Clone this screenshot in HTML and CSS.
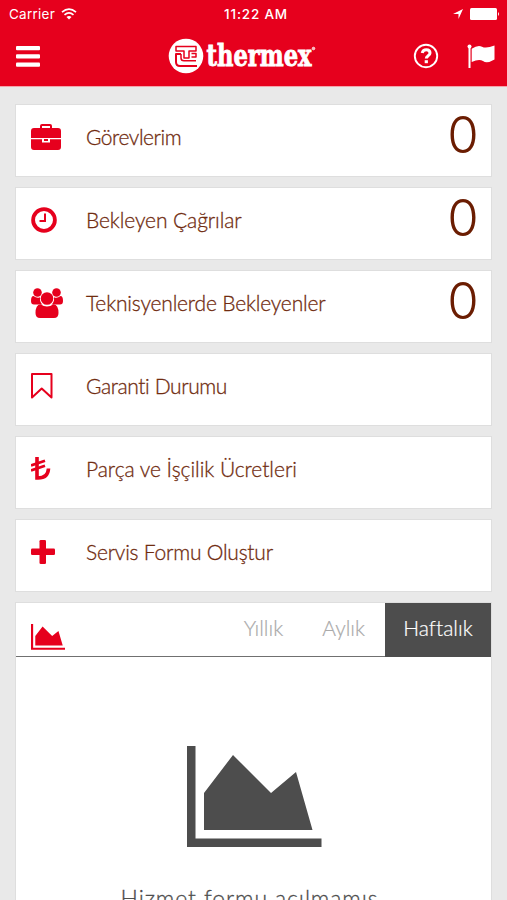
FILE: index.html
```html
<!DOCTYPE html>
<html lang="tr">
<head>
<meta charset="utf-8">
<title>Thermex</title>
<link rel="stylesheet" href="styles.css">
</head>
<body>
<header class="header">
  <div class="status">
    <div class="carrier"><span>Carrier</span>
      <svg width="16" height="12" viewBox="0 0 16 12" fill="none" stroke="#fff" stroke-width="1.7"><path d="M1 4.2Q8-2 15 4.2M3.5 6.9Q8 3 12.500 6.900"/><path d="M8 11.500 5.500 9Q8 7 10.500 9Z" fill="#fff" stroke="none"/></svg>
    </div>
    <span class="time">11:22 AM</span>
    <div class="power">
      <svg width="10" height="10" viewBox="0 0 10 10" fill="#fff"><path d="M10 0 5.500 10V5H0Z"/></svg>
      <svg width="30" height="12" viewBox="0 0 30 12" fill="#fff"><rect width="27" height="12" rx="1.500"/><path d="M28 4q2 2 0 4Z"/></svg>
    </div>
  </div>
  <div class="bar">
    <svg class="menu" width="24" height="21" viewBox="0 0 24 21" fill="#fff"><rect width="24" height="4.300" rx="1"/><rect y="8.300" width="24" height="4.300" rx="1"/><rect y="16.500" width="24" height="4.300" rx="1"/></svg>
    <svg class="logo" width="150" height="36" viewBox="0 0 150 36">
      <circle cx="18" cy="18" r="17.300" fill="#fff"/>
      <g fill="none" stroke="#e6001d" stroke-width="1.500" stroke-linejoin="round"><path d="M8 8.500H28V13H21V20H16V13H8Z"/><path d="M13 16H8V24Q8 28 12 28H29" stroke-width="2"/><path d="M13 16V20Q13 22.800 16 22.800H28M23.500 15.500H28V19H23.500"/></g>
      <text class="brand" x="38.500" y="28.300" textLength="105" lengthAdjust="spacingAndGlyphs">thermex</text>
      <circle cx="145.500" cy="10.500" r="1.300" fill="#f8b8bf" stroke="#fff" stroke-width=".7"/>
    </svg>
    <div class="actions">
      <svg width="26" height="26" viewBox="0 0 26 26" fill="none" stroke="#fff"><circle cx="13" cy="13" r="11.200" stroke-width="1.900"/><path d="M9.200 10Q10 6.800 13.300 6.800Q17 6.800 17 10Q17 11.800 15 12.900Q13.300 14 13.300 15.500" stroke-width="3"/><path d="M13.300 17.200V20.200" stroke-width="3.200"/></svg>
      <svg width="29" height="25" viewBox="0 0 29 25" fill="#fff"><circle cx="2.500" cy="2.500" r="2"/><path d="M1.500 2H3.500V24H1.500ZM4.700 4.700Q11 .5 15 2.700Q19 5 27.500 1.500V15.500Q20 20 16 17Q12 14.500 4.700 18Z"/></svg>
    </div>
  </div>
</header>
<main class="list">
  <a class="card"><span class="icon"><svg width="30" height="26" viewBox="0 0 30 26"><path fill-rule="evenodd" d="M9 4V2Q9 0 11 0H19Q21 0 21 2V4H27Q30 4 30 7V14H0V7Q0 4 3 4ZM11 4H19V2H11ZM0 15.200H11V18.500H19V15.200H30V23Q30 26 27 26H3Q0 26 0 23Z"/><path d="M13 15H17V17H13Z"/></svg></span><span class="label l1">Görevlerim</span><span class="count">0</span></a>
  <a class="card"><span class="icon"><svg width="26" height="26" viewBox="0 0 26 26" fill="none" stroke="#e6001d"><circle cx="13" cy="13" r="10.900" stroke-width="3.800"/><path d="M14 6.500V14H8.500" stroke-width="2"/></svg></span><span class="label l2">Bekleyen Çağrılar</span><span class="count">0</span></a>
  <a class="card"><span class="icon"><svg width="32" height="30" viewBox="0 0 32 30"><circle cx="6.500" cy="4.500" r="4.300"/><circle cx="25.500" cy="4.500" r="4.300"/><path d="M2.500 8Q6 10.800 9 9.200Q8.500 14 11.500 16.500H3Q0 16.500 0 13Q0 8 2.500 8ZM29.500 8Q26 10.800 23 9.200Q23.500 14 20.500 16.500H29Q32 16.500 32 13Q32 8 29.500 8Z"/><circle cx="16" cy="10.500" r="6.300"/><path d="M9.500 16.200Q16 20.800 22.500 16.200Q27.500 17 27.500 25Q27.500 30 23 30H9Q4.500 30 4.500 25Q4.500 17 9.500 16.200Z"/></svg></span><span class="label l3">Teknisyenlerde Bekleyenler</span><span class="count">0</span></a>
  <a class="card"><span class="icon"><svg width="22" height="26" viewBox="0 0 22 26" fill="none" stroke="#e6001d" stroke-width="2" stroke-linejoin="round"><path d="M1 1H20.500V24.500L10.700 15.500 1 24.500Z"/></svg></span><span class="label l4">Garanti Durumu</span></a>
  <a class="card"><span class="icon"><svg width="20" height="24" viewBox="0 0 20 24" fill="none" stroke="#e6001d"><path d="M6 0V21Q17 21.500 17.500 11.500" stroke-width="3.600"/><path d="M0 8.500 14 3.700M0 13.500 14 8.700" stroke-width="2.700"/></svg></span><span class="label l5">Parça ve İşçilik Ücretleri</span></a>
  <a class="card"><span class="icon"><svg width="24" height="24" viewBox="0 0 24 24"><rect x="8.500" width="6.500" height="24" rx="1.300"/><rect y="8.500" width="24" height="6.500" rx="1.300"/></svg></span><span class="label l6">Servis Formu Oluştur</span></a>
  <section class="panel">
    <div class="tabs">
      <svg class="tab-icon" width="34" height="26" viewBox="0 0 135 102" preserveAspectRatio="none"><path d="M0 0H8.500V93H135V101H0ZM17 47 46 10 84 47 109 27 126 84H17Z"/></svg>
      <span class="tab year">Yıllık</span><span class="tab month">Aylık</span><span class="tab active">Haftalık</span>
    </div>
    <div class="empty">
      <svg width="135" height="102" viewBox="0 0 135 102"><path d="M0 0H8.500V92.500H134.500V101H0ZM17 47 46 9 84 47 109 26 125.500 84H17Z"/></svg>
      <p>Hizmet formu açılmamış</p>
    </div>
  </section>
</main>
</body>
</html>
```
FILE: styles.css
```css
* { box-sizing: border-box; }
body { margin: 0; height: 900px; overflow: hidden; background: #e9e9e9; font-family: Lato, "Open Sans", sans-serif; font-weight: 300; font-variant-ligatures: none; }
.header { height: 87px; background: #e6001d; color: #fff; border-bottom: 1px solid #f5a3ab; }
.status { height: 27px; display: grid; grid-template-columns: 1fr auto 1fr; align-items: center; padding: 0 7px 0 9px; font: 400 13.500px Inter, sans-serif; }
.carrier { display: flex; align-items: center; gap: 6px; letter-spacing: .25px; }
.time { font-weight: 500; font-size: 13.500px; letter-spacing: .8px; padding-left: 3px; }
.power { display: flex; justify-content: flex-end; align-items: center; gap: 7px; }
.bar { height: 58px; display: grid; grid-template-columns: 152px 1fr auto; align-items: center; padding: 0 11px 0 16px; }
.actions { display: flex; align-items: center; gap: 28px; }
.logo { overflow: visible; }
.brand { font: bold 29px "DejaVu Serif Condensed", "DejaVu Serif", serif; fill: #fff; stroke: #fff; stroke-width: .8px; }
.list { padding: 17px 15px 0; display: flex; flex-direction: column; gap: 10px; }
.card { height: 73px; flex: none; display: flex; align-items: center; background: #fff; border: 1px solid #dedede; padding: 0 13px 0 15px; }
.icon { width: 55px; display: flex; fill: #e6001d; margin-top: -7px; }
.label { flex: 1; color: #702c10; font-size: 21px; line-height: 30px; margin-top: -7px; white-space: nowrap; -webkit-text-stroke: .3px #702c10; }
.l1 { letter-spacing: -.45px; }
.l2 { letter-spacing: -.1px; }
.l3 { letter-spacing: -.18px; }
.l4 { letter-spacing: -.4px; }
.l5 { letter-spacing: -.04px; }
.l6 { letter-spacing: -.22px; }
.count { width: 30px; display: flex; justify-content: center; font: 300 51px/60px Inter, sans-serif; color: #6b1d02; margin-top: -12px; }
.panel { height: 298px; flex: none; overflow: hidden; background: #fff; border: 1px solid #dedede; border-bottom: 0; }
.tabs { height: 54px; display: flex; border-bottom: 1px solid #707070; }
.tab-icon { fill: #e6001d; margin: 21px auto 0 15px; }
.tab { font-size: 21px; line-height: 50px; color: #aaa; -webkit-text-stroke: .2px; }
.year { margin-right: 39px; }
.month { margin-right: 20px; }
.active { width: 106px; height: 54px; text-align: center; color: #fff; background: #4d4d4d; }
.empty { display: flex; flex-direction: column; align-items: center; padding: 89px 0 0 1px; fill: #4d4d4d; color: #4d4d4d; }
.empty p { margin: 35px 0 0; padding-right: 9px; font-size: 23px; letter-spacing: .9px; line-height: 30px; -webkit-text-stroke: .3px; }
```
